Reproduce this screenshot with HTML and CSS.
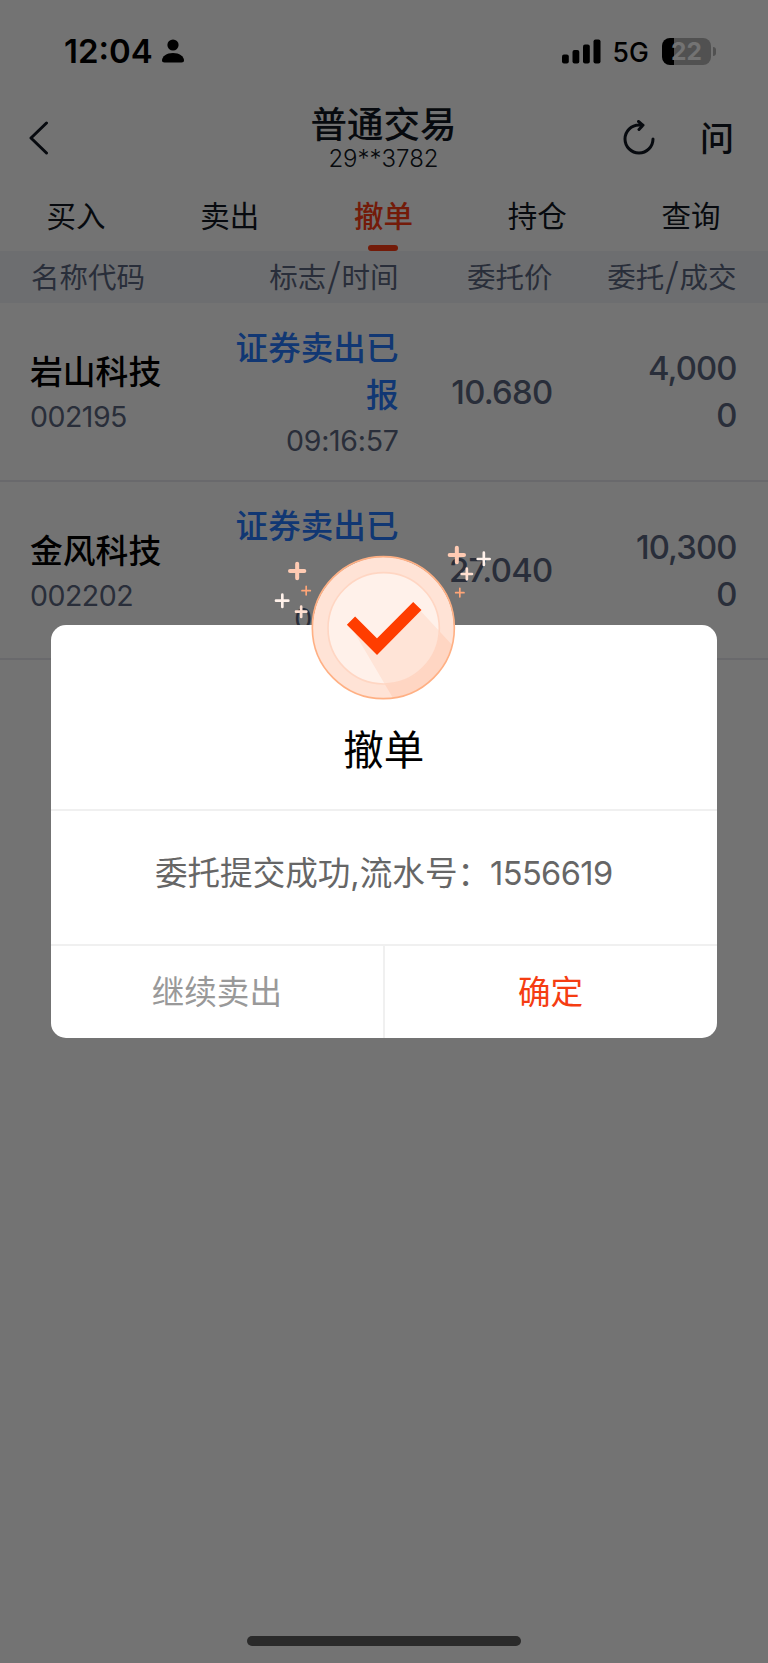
FILE: index.html
```
<!DOCTYPE html>
<html lang="zh-CN">

<head>
    <meta charset="UTF-8">
    <meta name="viewport" content="width=device-width, initial-scale=1.0">
    <title>普通交易</title>
    <link rel="stylesheet" href="styles.css">
</head>

<body>
    <div id="page">
        <!-- Status bar -->
        <div class="statusBar">
            <span class="time">12:04</span>
            <svg class="person" width="22" height="24" viewBox="0 0 22 24">
                <circle cx="11" cy="6" r="5.6" />
                <path d="M2.5 23.5C.8 23.5 0 22.8 0 21.5C0 17.5 4.5 14 11 14S22 17.5 22 21.5C22 22.8 21.2 23.5 19.5 23.5Z" />
            </svg>
            <div class="statusRight">
                <svg width="39" height="25" viewBox="0 0 39 25">
                    <rect x="0" y="15.5" width="6.8" height="9" rx="2" />
                    <rect x="10.5" y="11" width="6.8" height="13.5" rx="2" />
                    <rect x="21" y="5.5" width="6.8" height="19" rx="2" />
                    <rect x="31.5" y="0.5" width="7" height="24" rx="2" />
                </svg>
                <span class="network">5G</span>
                <div class="battery">22</div>
                <span class="batteryCap"></span>
            </div>
        </div>

        <!-- Title bar -->
        <div class="navBar">
            <svg class="back" width="20" height="36" viewBox="0 0 20 36">
                <path d="M17.5 3L2 18L17.5 33" />
            </svg>
            <div class="navTitle">
                <h1>普通交易</h1>
                <span>29**3782</span>
            </div>
            <div class="navIcons">
                <svg width="34" height="36" viewBox="0 0 34 36">
                    <path d="M31 19A14 14 0 1 1 17 5H21M16.5 1.5L21 5.3L17 9.5" />
                </svg>
                <span class="ask">问</span>
            </div>
        </div>

        <div class="tabs">
            <a>买入</a>
            <a>卖出</a>
            <a class="active">撤单</a>
            <a>持仓</a>
            <a>查询</a>
        </div>

        <div class="listHead">
            <span>名称代码</span>
            <span>标志<i>/</i>时间</span>
            <span>委托价</span>
            <span>委托<i>/</i>成交</span>
        </div>

        <div class="row">
            <div class="stock">
                <div class="name">岩山科技</div>
                <div class="code">002195</div>
            </div>
            <div class="state">
                <div class="flag">证券卖出已报</div>
                <div class="code">09:16:57</div>
            </div>
            <div class="num">10.680</div>
            <div class="num amount">4,000<br>0</div>
        </div>

        <div class="row">
            <div class="stock">
                <div class="name">金风科技</div>
                <div class="code">002202</div>
            </div>
            <div class="state">
                <div class="flag">证券卖出已报</div>
                <div class="code">09:17:17</div>
            </div>
            <div class="num">27.040</div>
            <div class="num amount">10,300<br>0</div>
        </div>
    </div>

    <!-- Result dialog -->
    <div class="mask">
        <div class="dialog">
            <svg class="badge" width="320" height="180" viewBox="0 0 960 540">
                <defs>
                    <clipPath id="outer"><circle cx="490" cy="293" r="212" /></clipPath>
                    <clipPath id="inner"><circle cx="491" cy="295" r="166" /></clipPath>
                </defs>
                <circle cx="490" cy="293" r="212" fill="#ffe3d6" />
                <path d="M393 290L471 350L600 241L740 392L700 540H540Z" fill="#ffd6c3" clip-path="url(#outer)" />
                <circle cx="491" cy="295" r="168" fill="#fff1ea" />
                <path d="M393 290L471 350L600 241L740 392L700 540H540Z" fill="#ffe4d7" clip-path="url(#inner)" />
                <circle cx="491" cy="295" r="167" fill="none" stroke="#ffd6c3" stroke-width="5" />
                <circle cx="490" cy="293" r="213" fill="none" stroke="#ffb084" stroke-width="5" />
                <path d="M393 272L471 350L592 228" fill="none" stroke="#ff3d00" stroke-width="35" />
                <g fill="none" stroke-linecap="round">
                    <path d="M210 123H253M231.500 101V145M689 75H732M710.500 53V97" stroke="#ffcbb3" stroke-width="12" />
                    <path d="M168 212H205M187 194V231M773 87H809M791.500 68V105" stroke="#fff1ea" stroke-width="8" />
                    <path d="M228 245H259M243.500 230V261M725 132H756M740.500 116V148" stroke="#ffe0d1" stroke-width="8" />
                    <path d="M246 182H271M258.500 169V195M707 188H732M719.500 175V201" stroke="#ffa577" stroke-width="5" />
                </g>
            </svg>
            <h2>撤单</h2>
            <p>委托提交成功,流水号：<span>1556619</span></p>
            <div class="dialogBtns">
                <button type="button">继续卖出</button>
                <button type="button" class="ok">确定</button>
            </div>
        </div>
    </div>
    <div class="homeBar"></div>
</body>

</html>
```
FILE: styles.css
```
* {
    box-sizing: border-box;
}

body {
    margin: 0;
    height: 1663px;
    position: relative;
    overflow: hidden;
    background-color: #fff;
    font-family: Inter, "Noto Sans CJK SC", sans-serif;
    color: #111722;
}

h1,
h2,
p {
    margin: 0;
    font-weight: 400;
}

.statusBar {
    display: flex;
    align-items: center;
    height: 102px;
    padding: 0 52px 0 64px;
    color: #000;
}

.time {
    font-size: 33px;
    font-weight: 600;
    width: 98px;
}

.statusRight {
    display: flex;
    align-items: center;
    margin-left: auto;
}

.network {
    font-size: 26.5px;
    font-weight: 500;
    width: 49.5px;
    margin-left: 12px;
    padding-top: 2px;
}

.battery {
    width: 49px;
    height: 27px;
    border-radius: 8px;
    background: linear-gradient(to right, #000 11.5px, #b3b3b3 11.5px);
    color: #fff;
    font-size: 24.5px;
    font-weight: 700;
    line-height: 27px;
    text-align: center;
}

.batteryCap {
    width: 3px;
    height: 9px;
    margin-left: 2px;
    border-radius: 0 4px 4px 0;
    background-color: #b3b3b3;
}

.navBar {
    display: flex;
    justify-content: space-between;
    height: 78px;
    padding: 0 36px 0 29px;
}

.navBar svg {
    fill: none;
    stroke: #111722;
    stroke-width: 3;
    stroke-linecap: round;
    stroke-linejoin: round;
    margin-top: 18px;
}

.navTitle {
    width: 200px;
    margin-left: 96px;
    padding-top: 1px;
    text-align: center;
}

.navTitle h1 {
    font-size: 36.5px;
    font-weight: 500;
    line-height: 44px;
}

.navTitle span {
    display: block;
    font-size: 24px;
    font-weight: 300;
    line-height: 24px;
}

.navIcons {
    display: flex;
    gap: 44px;
}

.ask {
    font-size: 34px;
    font-weight: 500;
    line-height: 74px;
    margin-right: -2px;
}

.tabs {
    display: flex;
    height: 71px;
    margin-left: -1px;
}

.tabs a {
    flex: 1;
    display: flex;
    flex-direction: column;
    align-items: center;
    font-size: 29.5px;
    line-height: 73px;
}

.tabs .active {
    color: #ff3d14;
    font-weight: 500;
}

.tabs .active::after {
    content: "";
    width: 30px;
    height: 6px;
    border-radius: 3px;
    background-color: #ff3d14;
    margin-top: -8px;
}

.listHead,
.row {
    display: grid;
    grid-template-columns: 192px 175.5px 154px 184px;
    padding-left: 31px;
    text-align: right;
}

.listHead {
    height: 52px;
    line-height: 54px;
    font-size: 28.5px;
    background-color: #f2f4f9;
    color: #5c6780;
}

.listHead i {
    font-style: normal;
    font-family: "Noto Sans CJK SC", sans-serif;
    font-size: 34px;
    line-height: 1;
    padding: 0 1px;
}

.listHead span:first-child,
.stock {
    text-align: left;
}

.row {
    height: 178.5px;
    padding-top: 3px;
    align-items: center;
    border-bottom: 2px solid #e8e9f0;
}

.name {
    font-size: 32.8px;
    font-weight: 500;
    line-height: 48px;
    color: #000;
}

.stock {
    margin-left: -1px;
}

.code {
    font-size: 28.5px;
    line-height: 41px;
    letter-spacing: -0.5px;
    color: #5c6780;
}

.state .code {
    letter-spacing: -0.3px;
}

.flag {
    font-size: 32.6px;
    font-weight: 500;
    line-height: 47.5px;
    color: #267aff;
}

.num {
    font-size: 32.8px;
    font-weight: 500;
    line-height: 47px;
    letter-spacing: -0.7px;
    color: #5c6780;
    margin-top: -1px;
}

.amount {
    letter-spacing: -0.9px;
}

.mask {
    position: absolute;
    top: 0;
    left: 0;
    width: 100%;
    height: 100%;
    padding: 624.5px 51.5px 0 51px;
    background-color: rgba(0, 0, 0, 0.55);
}

.dialog {
    position: relative;
    height: 413px;
    border-radius: 15px;
    background-color: #fff;
    text-align: center;
}

.badge {
    position: absolute;
    top: -94.5px;
    left: 169px;
}

.dialog h2 {
    height: 186px;
    padding-top: 96px;
    font-size: 40.5px;
    line-height: 60px;
    color: #000;
    border-bottom: 2px solid #f0f0f0;
}

.dialog p {
    height: 135px;
    font-size: 32.6px;
    line-height: 125px;
    color: #666;
    border-bottom: 2px solid #f0f0f0;
}

.dialog p span {
    letter-spacing: -0.6px;
}

.dialogBtns {
    display: flex;
    height: 92px;
}

.dialogBtns button {
    flex: 1;
    padding: 0 0 4px;
    border: none;
    background: none;
    font-family: inherit;
    font-size: 32.6px;
    color: #999;
}

.dialogBtns .ok {
    color: #f53d12;
    border-left: 2px solid #f0f0f0;
}

.homeBar {
    position: absolute;
    left: 247px;
    bottom: 17px;
    width: 274px;
    height: 10px;
    border-radius: 5px;
    background-color: #2a2a2a;
}
```
